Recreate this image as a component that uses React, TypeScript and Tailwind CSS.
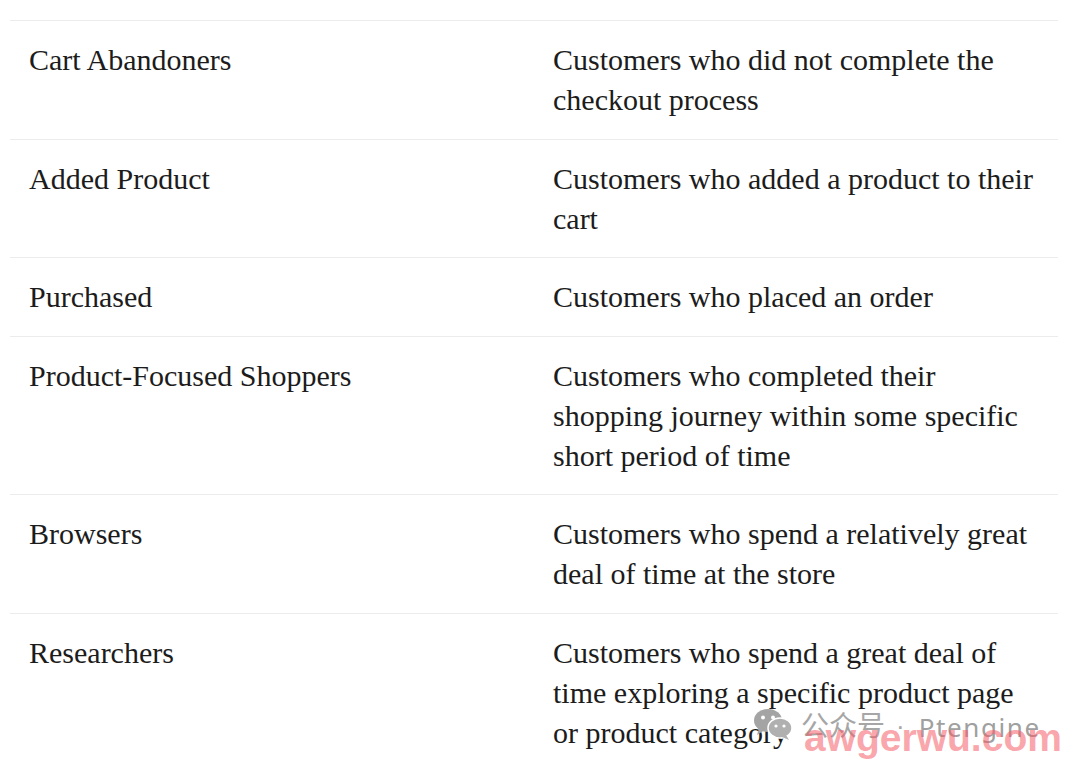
import React from 'react';

const rows: { name: string; desc: string }[] = [
  { name: 'Cart Abandoners', desc: 'Customers who did not complete the checkout process' },
  { name: 'Added Product', desc: 'Customers who added a product to their cart' },
  { name: 'Purchased', desc: 'Customers who placed an order' },
  {
    name: 'Product-Focused Shoppers',
    desc: 'Customers who completed their shopping journey within some specific short period of time',
  },
  { name: 'Browsers', desc: 'Customers who spend a relatively great deal of time at the store' },
  {
    name: 'Researchers',
    desc: 'Customers who spend a great deal of time exploring a specific product page or product category',
  },
];

const WeChatIcon = () => (
  <svg width="40" height="32" viewBox="0 0 40 32">
    <ellipse cx="15" cy="12.5" rx="14" ry="11.5" fill="#a4a4a4" />
    <path d="M6 20 L4 27 L11 22.5 Z" fill="#a4a4a4" />
    <ellipse cx="27" cy="20" rx="12" ry="10" fill="#b0b0b0" stroke="#fff" strokeWidth="1.5" />
    <path d="M33 27 L36 32 L28 28.5 Z" fill="#b0b0b0" />
    <circle cx="10" cy="9.5" r="2" fill="#fff" />
    <circle cx="20" cy="9.5" r="2" fill="#fff" />
    <circle cx="23" cy="18" r="1.6" fill="#fff" />
    <circle cx="31" cy="18" r="1.6" fill="#fff" />
  </svg>
);

// Watermark overlay in the bottom-right corner
const Watermark = () => (
  <div className="absolute left-[753px] top-[708px] w-[310px]">
    <div className="flex items-center">
      <WeChatIcon />
      <span className="ml-2 text-[28px] leading-none text-[#a6a6a6] font-['Noto_Sans_CJK_SC',sans-serif]">公众号</span>
      <span className="ml-[11px] mt-1 text-[26px] leading-none text-[#a6a6a6] font-['Liberation_Sans',sans-serif]">·</span>
      <span className="ml-[14px] mt-[6px] text-[26px] leading-none tracking-[1.6px] text-[#a0a0a0] font-['Noto_Sans',sans-serif]">
        Ptengine
      </span>
    </div>
    <div className="absolute left-[51px] top-[10px] text-[39px] font-bold leading-none text-[rgba(245,90,100,0.55)] font-['Liberation_Sans',sans-serif]">
      awgerwu.com
    </div>
  </div>
);

export default function App() {
  return (
    <div className="relative w-[1080px] h-[769px] overflow-hidden bg-white pt-5 pl-[10px] pr-[22px] font-['Liberation_Serif',serif] text-[#1c1c1c]">
      <div className="flex flex-col">
        {rows.map((r) => (
          <div key={r.name} className="grid grid-cols-2 border-t border-[#ececec]">
            <div className="px-[19px] pt-[19px] pb-[18.5px] text-[30px] leading-[40px]">{r.name}</div>
            <div className="px-[19px] pt-[19px] pb-[18.5px] text-[30px] leading-[40px]">{r.desc}</div>
          </div>
        ))}
      </div>
      <Watermark />
    </div>
  );
}
